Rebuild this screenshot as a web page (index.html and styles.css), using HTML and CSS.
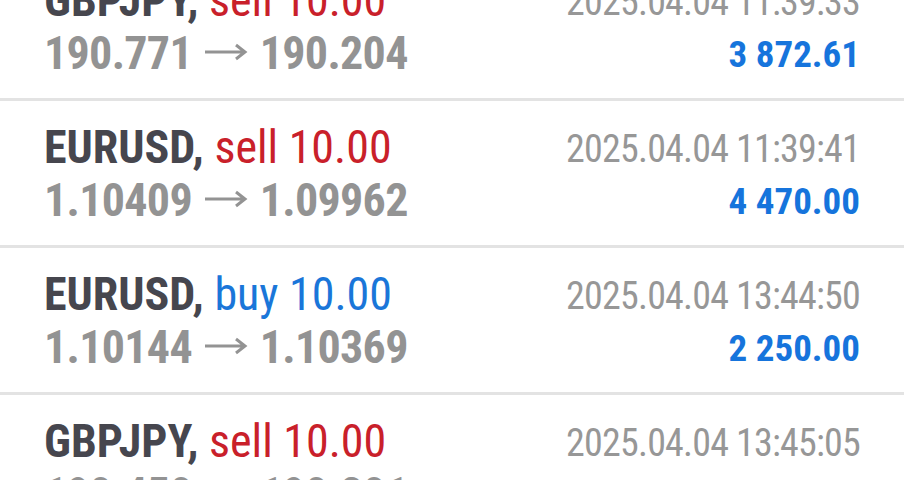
FILE: index.html
```html
<!DOCTYPE html>
<html lang="en">
<head>
    <meta charset="UTF-8">
    <meta name="viewport" content="width=device-width, initial-scale=1.0">
    <title>History</title>
    <link rel="stylesheet" href="styles.css">
</head>
<body>
    <div class="list">
        <div class="deal">
            <div class="left">
                <div class="title"><b>GBPJPY,</b> <span class="sell">sell 10.00</span></div>
                <div class="prices">190.771 <svg class="arrow" viewBox="0 0 44 18"><path d="M1 9H41M32 2L41 9L32 16"/></svg> 190.204</div>
            </div>
            <div class="right">
                <div class="time">2025.04.04 11:39:33</div>
                <div class="profit">3 872.61</div>
            </div>
        </div>
        <div class="deal">
            <div class="left">
                <div class="title"><b>EURUSD,</b> <span class="sell">sell 10.00</span></div>
                <div class="prices">1.10409 <svg class="arrow" viewBox="0 0 44 18"><path d="M1 9H41M32 2L41 9L32 16"/></svg> 1.09962</div>
            </div>
            <div class="right">
                <div class="time">2025.04.04 11:39:41</div>
                <div class="profit">4 470.00</div>
            </div>
        </div>
        <div class="deal">
            <div class="left">
                <div class="title"><b>EURUSD,</b> <span class="buy">buy 10.00</span></div>
                <div class="prices">1.10144 <svg class="arrow" viewBox="0 0 44 18"><path d="M1 9H41M32 2L41 9L32 16"/></svg> 1.10369</div>
            </div>
            <div class="right">
                <div class="time">2025.04.04 13:44:50</div>
                <div class="profit">2 250.00</div>
            </div>
        </div>
        <div class="deal">
            <div class="left">
                <div class="title"><b>GBPJPY,</b> <span class="sell">sell 10.00</span></div>
                <div class="prices">190.450 <svg class="arrow" viewBox="0 0 44 18"><path d="M1 9H41M32 2L41 9L32 16"/></svg> 190.201</div>
            </div>
            <div class="right">
                <div class="time">2025.04.04 13:45:05</div>
                <div class="profit">1 598.30</div>
            </div>
        </div>
    </div>
</body>
</html>
```

FILE: styles.css
```css
body{
    margin: 0;
    background: #fff;
    font-family: Roboto, "Noto Sans", sans-serif;
    font-stretch: 75%;
    overflow: hidden;
}
.list{
    margin-top: -46px;
}
.deal{
    display: flex;
    justify-content: space-between;
    padding: 20px 44px 18px 44px;
    border-bottom: 3px solid #e3e3e3;
}
.title,
.prices{
    font-size: 46px;
    line-height: 53px;
    white-space: nowrap;
}
.title b{
    color: #46464e;
}
.sell{
    color: #c9202a;
}
.buy{
    color: #1a76d9;
}
.prices{
    color: #939393;
    font-weight: bold;
    letter-spacing: -0.7px;
    word-spacing: 2px;
}
.arrow{
    width: 44px;
    height: 18px;
    vertical-align: 8px;
    fill: none;
    stroke: #939393;
    stroke-width: 3;
}
.right{
    text-align: right;
    padding-top: 2px;
}
.time{
    font-size: 38px;
    line-height: 53px;
    letter-spacing: -0.8px;
    color: #979797;
}
.profit{
    font-size: 37px;
    line-height: 51px;
    font-weight: bold;
    color: #1674dc;
}
```
